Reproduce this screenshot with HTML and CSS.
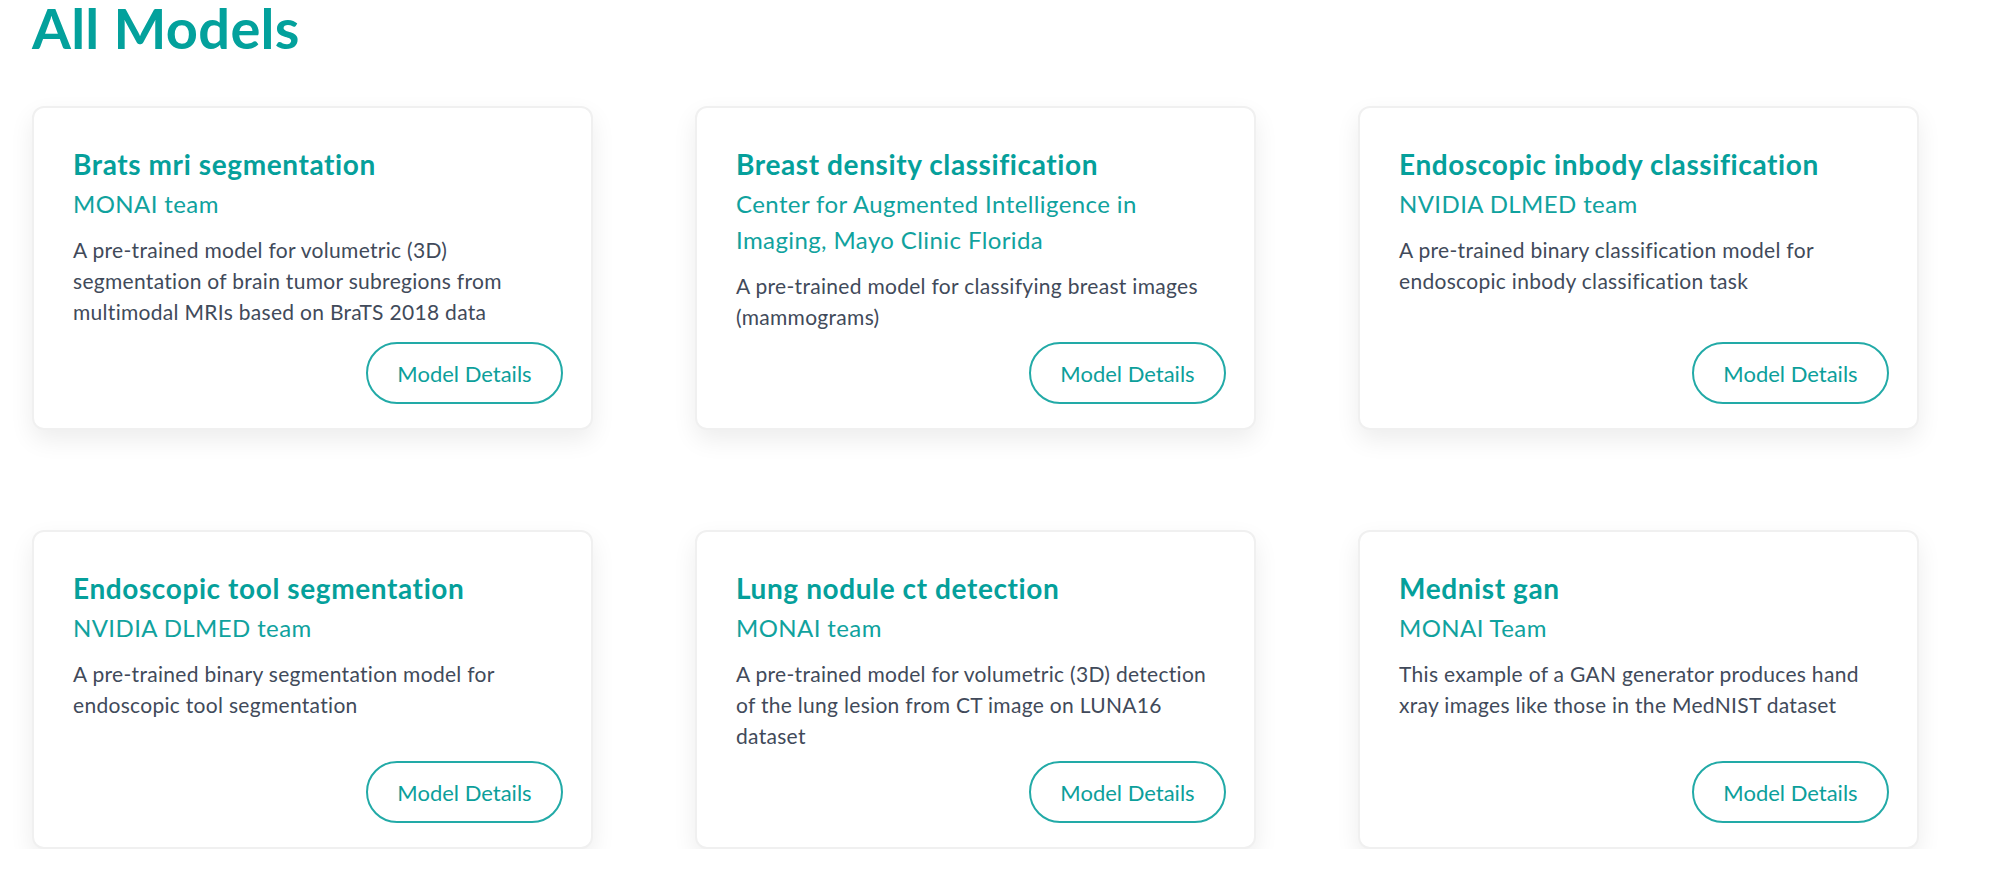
FILE: index.html
```html
<!DOCTYPE html>
<html lang="en">
<head>
<meta charset="utf-8">
<title>All Models</title>
<link rel="stylesheet" href="styles.css">
</head>
<body>
<main class="page">
  <h1 class="page-title">All Models</h1>
  <section class="grid">
    <article class="card">
      <h2 class="card-title">Brats mri segmentation</h2>
      <p class="card-author">MONAI team</p>
      <p class="card-desc">A pre-trained model for volumetric (3D) segmentation of brain tumor subregions from multimodal MRIs based on BraTS 2018 data</p>
      <a class="btn" href="#">Model Details</a>
    </article>
    <article class="card">
      <h2 class="card-title">Breast density classification</h2>
      <p class="card-author">Center for Augmented Intelligence in Imaging, Mayo Clinic Florida</p>
      <p class="card-desc">A pre-trained model for classifying breast images (mammograms)</p>
      <a class="btn" href="#">Model Details</a>
    </article>
    <article class="card">
      <h2 class="card-title">Endoscopic inbody classification</h2>
      <p class="card-author">NVIDIA DLMED team</p>
      <p class="card-desc">A pre-trained binary classification model for endoscopic inbody classification task</p>
      <a class="btn" href="#">Model Details</a>
    </article>
    <article class="card">
      <h2 class="card-title">Endoscopic tool segmentation</h2>
      <p class="card-author">NVIDIA DLMED team</p>
      <p class="card-desc">A pre-trained binary segmentation model for endoscopic tool segmentation</p>
      <a class="btn" href="#">Model Details</a>
    </article>
    <article class="card">
      <h2 class="card-title">Lung nodule ct detection</h2>
      <p class="card-author">MONAI team</p>
      <p class="card-desc">A pre-trained model for volumetric (3D) detection of the lung lesion from CT image on LUNA16 dataset</p>
      <a class="btn" href="#">Model Details</a>
    </article>
    <article class="card">
      <h2 class="card-title">Mednist gan</h2>
      <p class="card-author">MONAI Team</p>
      <p class="card-desc">This example of a GAN generator produces hand xray images like those in the MedNIST dataset</p>
      <a class="btn" href="#">Model Details</a>
    </article>
  </section>
</main>
</body>
</html>
```

FILE: styles.css
```css
* { box-sizing: border-box; }

html, body {
  margin: 0;
  padding: 0;
  background: #ffffff;
}

body {
  font-family: Lato, "Noto Sans", "Liberation Sans", sans-serif;
  color: #3e4858;
}

.page {
  padding: 0 32px;
}

.page-title {
  margin: 0 0 50px 0;
  font-size: 56px;
  line-height: 56px;
  font-weight: 700;
  letter-spacing: 0.3px;
  color: #03a19c;
}

.grid {
  display: grid;
  grid-template-columns: repeat(3, 561px);
  column-gap: 102px;
  row-gap: 100px;
}

.card {
  display: flex;
  flex-direction: column;
  background: #ffffff;
  border: 2px solid #f0f0f0;
  border-radius: 12px;
  box-shadow: 0 10px 25px rgba(0, 0, 0, 0.075);
  padding: 39px 24px 24px 39px;
}

.card-title {
  margin: 0 0 4px 0;
  font-size: 28px;
  line-height: 35px;
  font-weight: 700;
  letter-spacing: 0.6px;
  color: #05a09b;
}

.card-author {
  margin: 0 0 12px 0;
  max-width: 460px;
  font-size: 24px;
  line-height: 36px;
  font-weight: 400;
  letter-spacing: 0.4px;
  color: #10a29e;
}

.card-desc {
  margin: 0 0 10px 0;
  font-size: 21px;
  line-height: 31px;
  letter-spacing: 0.3px;
  color: #414a5a;
}

.btn {
  margin: auto 4px 0 0;
  align-self: flex-end;
  display: flex;
  align-items: center;
  justify-content: center;
  width: 197px;
  height: 62px;
  border: 2px solid #22aaa7;
  border-radius: 31px;
  font-size: 22px;
  color: #0c9f9b;
  text-decoration: none;
}
```
